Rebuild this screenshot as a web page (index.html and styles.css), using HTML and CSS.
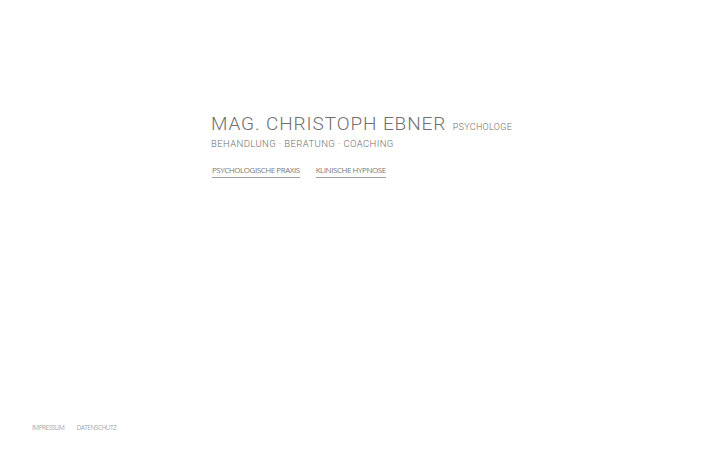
FILE: index.html
```html
<!DOCTYPE html>
<html lang="de">
<head>
<meta charset="utf-8">
<title>Mag. Christoph Ebner</title>
<link rel="stylesheet" href="styles.css">
</head>
<body>
<div class="page">
  <main class="intro">
    <h1 class="title">MAG. CHRISTOPH EBNER <span class="role">PSYCHOLOGE</span></h1>
    <p class="tagline">BEHANDLUNG · BERATUNG · COACHING</p>
    <nav class="links">
      <a href="#">PSYCHOLOGISCHE PRAXIS</a>
      <a href="#">KLINISCHE HYPNOSE</a>
    </nav>
  </main>
  <footer class="footer">
    <a href="#">IMPRESSUM</a>
    <a href="#">DATENSCHUTZ</a>
  </footer>
</div>
</body>
</html>
```
FILE: styles.css
```css
html, body { margin: 0; padding: 0; background: #fff; }
.page {
  height: 100vh;
  display: flex;
  flex-direction: column;
  font-family: Roboto, "Liberation Sans", Arial, sans-serif;
}
.intro {
  flex: 1;
  align-self: center;
  padding-top: 113px;
  margin-left: 3px;
}
.title {
  margin: 0;
  font-weight: 300;
  font-size: 19px;
  letter-spacing: 0.9px;
  color: #707070;
  line-height: 22px;
}
.role {
  font-size: 9px;
  letter-spacing: 0.3px;
  margin-left: 1px;
}
.tagline {
  margin: 0;
  font-weight: 300;
  font-size: 9.5px;
  letter-spacing: 0.4px;
  color: #707070;
  line-height: 12px;
}
.links {
  display: flex;
  gap: 16px;
  margin-top: 14px;
  padding-left: 1px;
}
.links a {
  font-family: "Open Sans", sans-serif;
  font-size: 8px;
  color: #7a7a7a;
  text-decoration: none;
  border-bottom: 1px solid #a0a0a0;
  padding-bottom: 2px;
  line-height: 11px;
  letter-spacing: -0.45px;
}
.footer {
  display: flex;
  gap: 12px;
  padding: 0 0 18px 32px;
}
.footer a {
  font-family: "Open Sans", sans-serif;
  font-size: 6.5px;
  color: #aaa;
  text-decoration: none;
  letter-spacing: -0.5px;
}
```
